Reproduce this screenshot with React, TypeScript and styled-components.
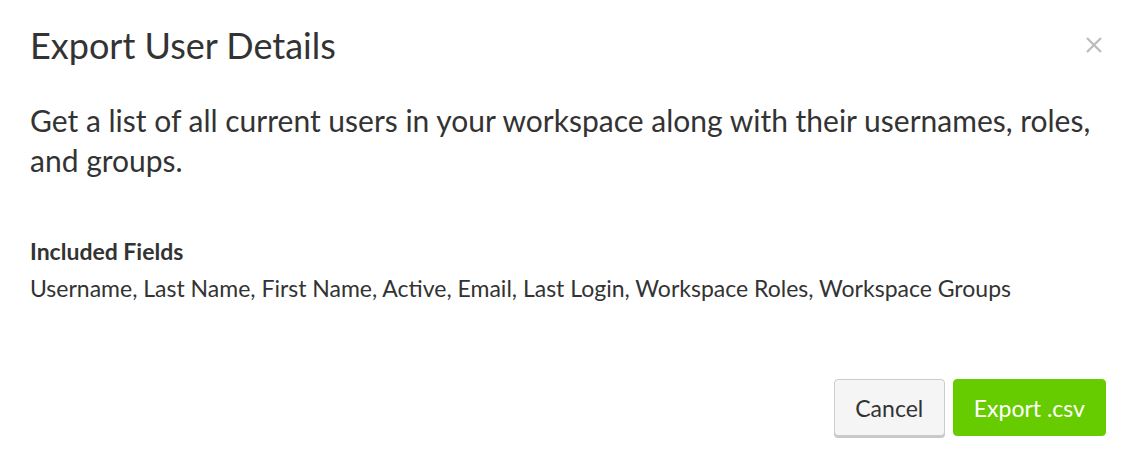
import styled, { createGlobalStyle } from "styled-components";

const GlobalStyle = createGlobalStyle`
	html, body {
		margin: 0;
		padding: 0;
		background: #ffffff;
		font-family: Lato, "Open Sans", sans-serif;
		color: #333333;
	}
`;

const Modal = styled.div`
	width: 1131px;
	height: 458px;
	box-sizing: border-box;
	padding: 0 25px 0 30px;
	display: flex;
	flex-direction: column;
`;
const Header = styled.div`
	display: flex;
	align-items: center;
	justify-content: space-between;
	height: 90px;
`;
const Title = styled.h1`
	margin: 0;
	font-size: 36px;
	font-weight: 400;
	color: #333333;
`;
const Close = styled.button`
	border: 0;
	background: none;
	padding: 0;
	width: 24px;
	height: 24px;
	display: flex;
	align-items: center;
	justify-content: center;
	cursor: pointer;
`;
const Lead = styled.p`
	margin: 10px 0 0;
	font-size: 30px;
	line-height: 40px;
	color: #333333;
`;
const Fields = styled.div`
	margin-top: 53px;
	font-size: 23px;
	line-height: 37px;
`;
const FieldsLabel = styled.div`
	font-weight: 700;
`;
const Footer = styled.div`
	margin-top: auto;
	margin-bottom: 22px;
	display: flex;
	justify-content: flex-end;
	gap: 8px;
`;
const Button = styled.button<{ $primary?: boolean }>`
	height: 57px;
	min-width: 111px;
	padding: 0 20px;
	border-radius: 4px;
	font-family: Lato, sans-serif;
	font-size: 23px;
	cursor: pointer;
	border: 1px solid ${(p) => (p.$primary ? "#66cc00" : "#cccccc")};
	background: ${(p) => (p.$primary ? "#66cc00" : "#f5f5f5")};
	color: ${(p) => (p.$primary ? "#ffffff" : "#333333")};
	box-shadow: ${(p) => (p.$primary ? "none" : "0 2px 0 #c8c8c8")};
`;

export default function App(): JSX.Element {
	return (
		<Modal>
			<GlobalStyle />
			<Header>
				<Title>Export User Details</Title>
				<Close aria-label="Close">
					<svg width="18" height="18" viewBox="0 0 18 18">
						<path d="M2 2 L16 16 M16 2 L2 16" stroke="#bdbdbd" strokeWidth="2.4" />
					</svg>
				</Close>
			</Header>
			<Lead>
				Get a list of all current users in your workspace along with their usernames, roles, and groups.
			</Lead>
			<Fields>
				<FieldsLabel>Included Fields</FieldsLabel>
				<div>
					Username, Last Name, First Name, Active, Email, Last Login, Workspace Roles, Workspace Groups
				</div>
			</Fields>
			<Footer>
				<Button>Cancel</Button>
				<Button $primary>Export .csv</Button>
			</Footer>
		</Modal>
	);
}
